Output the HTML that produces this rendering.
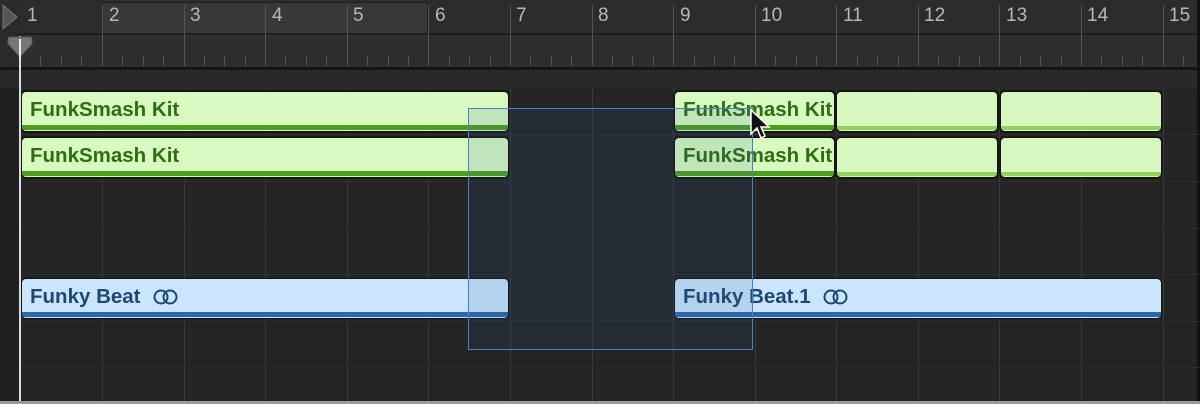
<!DOCTYPE html>
<html><head><meta charset="utf-8"><style>
*{margin:0;padding:0;box-sizing:border-box}
body{width:1200px;height:404px;background:#242424;position:relative;overflow:hidden;font-family:"Liberation Sans",sans-serif}
.abs{position:absolute}
.num{position:absolute;top:5px;font-size:19px;color:#b8b8b8}
.bl{position:absolute;top:5px;width:1px;height:61px;background:#555}
.tk{position:absolute;top:56px;width:1px;height:10px;background:#555}
.vg{position:absolute;top:88px;width:1px;height:313px;background:#3a3a3a}
.hg{position:absolute;left:0;width:1200px;height:1px;background:#2d2d2d}
.g{position:absolute;background:#d8f9c0;border:1px solid #111;border-radius:5px;overflow:hidden;box-shadow:0 0 0 1px #1a1a1a}
.g .t{position:absolute;left:8px;top:6px;font-size:20.5px;font-weight:bold;color:#2e6e12;white-space:nowrap}
.g .b{position:absolute;left:0;right:0;bottom:1px;height:5px;background:#4c9e1c}
.g2{background:#d6f8be}
.g2 .b{height:4px;background:#8fd35a}
.bb{position:absolute;background:#cbe5fc;border:1px solid #111;border-radius:5px;overflow:hidden}
.bb .t{position:absolute;left:8px;top:6px;font-size:20.5px;font-weight:bold;color:#1d4775;white-space:nowrap}
.bb .b{position:absolute;left:0;right:0;bottom:1px;height:5px;background:#2b69ac}
.ring{display:inline-block;vertical-align:-2px;margin-left:12px}
</style></head><body>
<div class="abs" style="left:0;top:0;width:1200px;height:34px;background:#2c2c2c;border-bottom:1px solid #1c1c1c"></div>
<div class="abs" style="left:102px;top:2px;width:326px;height:32px;background:#383838;border:1px solid #1e1e1e"></div>
<div class="abs" style="left:0;top:34px;width:1200px;height:33px;background:#2e2e2e;border-top:1px solid #1f1f1f"></div>
<div class="abs" style="left:0;top:0;width:20px;height:67px;background:#2a2a2a"></div>
<div class="abs" style="left:0;top:67px;width:1200px;height:3px;background:#151515"></div>
<div class="abs" style="left:0;top:70px;width:1200px;height:19px;background:repeating-linear-gradient(45deg,#2f2f2f 0 1px,#272727 1px 3px)"></div>
<div class="abs" style="left:1197px;top:0;width:3px;height:404px;background:#111"></div>
<svg class="abs" style="left:2px;top:4px" width="16" height="26"><path d="M1 1 L15 13 L1 25 Z" fill="#555" stroke="#777"/></svg>
<div class="num" style="left:27px">1</div>
<div class="bl" style="left:102px"></div><div class="num" style="left:109px">2</div>
<div class="bl" style="left:184px"></div><div class="num" style="left:190px">3</div>
<div class="bl" style="left:265px"></div><div class="num" style="left:272px">4</div>
<div class="bl" style="left:347px"></div><div class="num" style="left:353px">5</div>
<div class="bl" style="left:428px"></div><div class="num" style="left:435px">6</div>
<div class="bl" style="left:510px"></div><div class="num" style="left:516px">7</div>
<div class="bl" style="left:592px"></div><div class="num" style="left:598px">8</div>
<div class="bl" style="left:673px"></div><div class="num" style="left:680px">9</div>
<div class="bl" style="left:755px"></div><div class="num" style="left:761px">10</div>
<div class="bl" style="left:836px"></div><div class="num" style="left:843px">11</div>
<div class="bl" style="left:918px"></div><div class="num" style="left:924px">12</div>
<div class="bl" style="left:999px"></div><div class="num" style="left:1006px">13</div>
<div class="bl" style="left:1081px"></div><div class="num" style="left:1087px">14</div>
<div class="bl" style="left:1163px"></div><div class="num" style="left:1169px">15</div>
<div class="tk" style="left:40px"></div><div class="tk" style="left:61px"></div><div class="tk" style="left:81px"></div>
<div class="tk" style="left:122px"></div><div class="tk" style="left:143px"></div><div class="tk" style="left:163px"></div>
<div class="tk" style="left:204px"></div><div class="tk" style="left:224px"></div><div class="tk" style="left:245px"></div>
<div class="tk" style="left:285px"></div><div class="tk" style="left:306px"></div><div class="tk" style="left:326px"></div>
<div class="tk" style="left:367px"></div><div class="tk" style="left:388px"></div><div class="tk" style="left:408px"></div>
<div class="tk" style="left:449px"></div><div class="tk" style="left:469px"></div><div class="tk" style="left:490px"></div>
<div class="tk" style="left:530px"></div><div class="tk" style="left:551px"></div><div class="tk" style="left:571px"></div>
<div class="tk" style="left:612px"></div><div class="tk" style="left:632px"></div><div class="tk" style="left:653px"></div>
<div class="tk" style="left:694px"></div><div class="tk" style="left:714px"></div><div class="tk" style="left:734px"></div>
<div class="tk" style="left:775px"></div><div class="tk" style="left:796px"></div><div class="tk" style="left:816px"></div>
<div class="tk" style="left:857px"></div><div class="tk" style="left:877px"></div><div class="tk" style="left:898px"></div>
<div class="tk" style="left:938px"></div><div class="tk" style="left:959px"></div><div class="tk" style="left:979px"></div>
<div class="tk" style="left:1020px"></div><div class="tk" style="left:1040px"></div><div class="tk" style="left:1061px"></div>
<div class="tk" style="left:1101px"></div><div class="tk" style="left:1122px"></div><div class="tk" style="left:1142px"></div>
<div class="tk" style="left:1183px"></div>
<div class="vg" style="left:102px"></div><div class="vg" style="left:184px"></div><div class="vg" style="left:265px"></div>
<div class="vg" style="left:347px"></div><div class="vg" style="left:428px"></div><div class="vg" style="left:510px"></div>
<div class="vg" style="left:592px"></div><div class="vg" style="left:673px"></div><div class="vg" style="left:755px"></div>
<div class="vg" style="left:836px"></div><div class="vg" style="left:918px"></div><div class="vg" style="left:999px"></div>
<div class="vg" style="left:1081px"></div><div class="vg" style="left:1163px"></div>
<div class="hg" style="top:134px"></div><div class="hg" style="top:181px"></div><div class="hg" style="top:228px"></div>
<div class="hg" style="top:274px"></div><div class="hg" style="top:321px"></div><div class="hg" style="top:367px"></div>
<div class="abs" style="left:0;top:88px;width:20px;height:313px;background:#202020"></div>
<div class="abs" style="left:0;top:401px;width:1200px;height:3px;background:#9a9a9a"></div>
<div class="g" style="left:21px;top:91px;width:488px;height:41px"><div class="t">FunkSmash Kit</div><div class="b"></div></div>
<div class="g" style="left:21px;top:137px;width:488px;height:41px"><div class="t">FunkSmash Kit</div><div class="b"></div></div>
<div class="g" style="left:674px;top:91px;width:161px;height:41px"><div class="t">FunkSmash Kit</div><div class="b"></div></div>
<div class="g g2" style="left:836px;top:91px;width:162px;height:41px"><div class="b"></div></div>
<div class="g g2" style="left:1000px;top:91px;width:162px;height:41px"><div class="b"></div></div>
<div class="g" style="left:674px;top:137px;width:161px;height:41px"><div class="t">FunkSmash Kit</div><div class="b"></div></div>
<div class="g g2" style="left:836px;top:137px;width:162px;height:41px"><div class="b"></div></div>
<div class="g g2" style="left:1000px;top:137px;width:162px;height:41px"><div class="b"></div></div>
<div class="bb" style="left:21px;top:278px;width:488px;height:41px"><div class="t">Funky Beat<svg class="ring" width="26" height="16"><circle cx="8" cy="8" r="6.5" fill="none" stroke="#1d4775" stroke-width="2"/><circle cx="17" cy="8" r="6.5" fill="none" stroke="#1d4775" stroke-width="2"/></svg></div><div class="b"></div></div>
<div class="bb" style="left:674px;top:278px;width:488px;height:41px"><div class="t">Funky Beat.1<svg class="ring" width="26" height="16"><circle cx="8" cy="8" r="6.5" fill="none" stroke="#1d4775" stroke-width="2"/><circle cx="17" cy="8" r="6.5" fill="none" stroke="#1d4775" stroke-width="2"/></svg></div><div class="b"></div></div>
<div class="abs" style="left:19px;top:36px;width:2px;height:365px;background:#ddd"></div>
<svg class="abs" style="left:7px;top:36px" width="26" height="22"><path d="M1 3 Q1 1 3 1 L23 1 Q25 1 25 3 L25 8 L14 20 L12 20 L1 8 Z" fill="#777" stroke="#555"/><rect x="12" y="3" width="2" height="19" fill="#eee"/></svg>
<div class="abs" style="left:468px;top:108px;width:285px;height:242px;background:rgba(50,90,150,0.13);border:1.5px solid #4a7fd0"></div>
<svg class="abs" style="left:749px;top:108px" width="24" height="36"><path d="M2 2 L2 26 L8 20 L12 30 L16 28 L12 19 L20 19 Z" fill="#111" stroke="#fff" stroke-width="1.5"/></svg>
</body></html>
